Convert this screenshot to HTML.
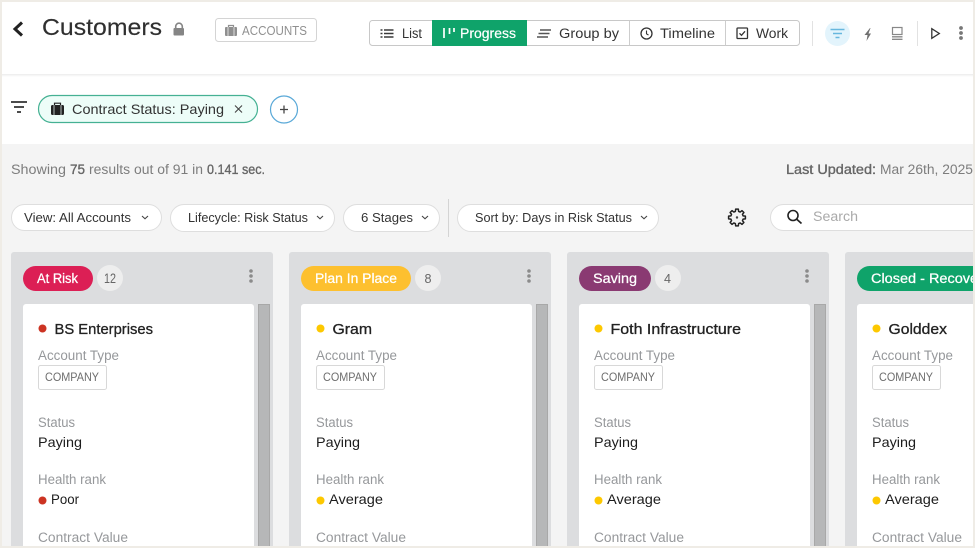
<!DOCTYPE html>
<html lang="en"><head><meta charset="utf-8"><title>Customers</title>
<style>
html,body{margin:0;padding:0;width:975px;height:548px;overflow:hidden;background:#efece6}
svg{display:block}
text{font-family:"Liberation Sans",sans-serif}
.l{font-size:13.5px;fill:#96989b}
.v{font-size:14px;fill:#1c1c1c}
.t{font-size:14.5px;fill:#222;stroke:#222;stroke-width:.3px}
.c{font-size:11.5px;fill:#6e6e6e}
.b{font-size:13.5px;fill:#fff;stroke:#fff;stroke-width:.25px}
.n{font-size:13px;fill:#666}
.p{font-size:12.5px;fill:#333}
.s{font-size:13.5px;fill:#7d7d7d}
.sb{font-size:13.5px;fill:#666;stroke:#666;stroke-width:.35px}
.tab{font-size:13.5px;fill:#333}
</style></head><body>
<svg width="975" height="548" viewBox="0 0 975 548" xmlns="http://www.w3.org/2000/svg">
<rect width="975" height="548" fill="#efece6"/>
<defs>
<clipPath id="m"><rect x="2" y="2" width="971" height="544"/></clipPath>
<linearGradient id="sh" x1="0" y1="0" x2="0" y2="1"><stop offset="0" stop-color="#ececec"/><stop offset="1" stop-color="#fff"/></linearGradient>
</defs>
<g clip-path="url(#m)">
<rect x="2" y="2" width="971" height="142" fill="#fff"/>
<rect x="2" y="74" width="971" height="3" fill="url(#sh)"/>
<rect x="2" y="144" width="971" height="402" fill="#f4f4f4"/>

<!-- header -->
<path d="M22 22.500 15 29l7 6.500" fill="none" stroke="#222" stroke-width="3"/>
<text x="42" y="35" font-size="23" fill="#2f2f2f" stroke="#2f2f2f" stroke-width=".15" textLength="120" lengthAdjust="spacingAndGlyphs">Customers</text>
<path d="M175.700 28v-1.500a3.300 3.300 0 0 1 6.600 0V28" fill="none" stroke="#858585" stroke-width="1.600"/>
<rect x="173.500" y="28" width="10.500" height="7.500" rx="1" fill="#858585"/>
<rect x="215.500" y="18.500" width="101" height="23" rx="3" fill="#fff" stroke="#d4d4d4"/>
<rect x="225" y="27" width="12" height="9" rx="1" fill="#8f8f8f"/>
<path d="M228.500 27v-1.500h5V27" fill="none" stroke="#8f8f8f" stroke-width="1.200"/>
<path d="M228 27v9M234 27v9" stroke="#fff" stroke-width=".7"/>
<text x="242" y="35" font-size="12.500" fill="#909090" textLength="65" lengthAdjust="spacingAndGlyphs">ACCOUNTS</text>

<!-- view tabs -->
<rect x="369.500" y="20.500" width="430" height="25" rx="3" fill="#fff" stroke="#c8c8c8"/>
<rect x="432" y="20" width="95" height="26" fill="#0fa36a"/>
<path d="M629.500 20.500v25M725.500 20.500v25" stroke="#cdcdcd"/>
<path d="M384 30h9.500M384 33.500h9.500M384 37h9.500M380.500 30h2M380.500 33.500h2M380.500 37h2" stroke="#3a3a3a" stroke-width="1.400" fill="none"/>
<text class="tab" x="402" y="38" textLength="20" lengthAdjust="spacingAndGlyphs">List</text>
<path d="M444 28v10M449.500 28v6M454 28v4" stroke="#fff" stroke-width="1.700" fill="none"/>
<text class="tab" x="460" y="38" textLength="56" lengthAdjust="spacingAndGlyphs" style="fill:#fff;stroke:#fff;stroke-width:.2px">Progress</text>
<path d="M540 30h11M538.500 33.500h11M537 37h11" stroke="#555" stroke-width="1.500" fill="none"/>
<text class="tab" x="559" y="38" textLength="60" lengthAdjust="spacingAndGlyphs">Group by</text>
<circle cx="646.500" cy="33.500" r="5.500" fill="none" stroke="#333" stroke-width="1.300"/>
<path d="M646.500 30.500v3.300l2 1.300" fill="none" stroke="#333" stroke-width="1.100"/>
<text class="tab" x="660" y="38" textLength="55" lengthAdjust="spacingAndGlyphs">Timeline</text>
<rect x="737" y="28" width="10.500" height="10.500" rx=".8" fill="none" stroke="#333" stroke-width="1.300"/>
<path d="M739.500 33.300l2 2 3.500-4" fill="none" stroke="#333" stroke-width="1.300"/>
<text class="tab" x="756" y="38" textLength="32" lengthAdjust="spacingAndGlyphs">Work</text>

<!-- right icons -->
<path d="M812.500 21v25M917.500 21v25" stroke="#e2e2e2"/>
<circle cx="837.500" cy="33.500" r="12.500" fill="#e3f4fc"/>
<path d="M830.500 29.500h14M833 33.500h9M835.500 37.500h4" stroke="#67b7de" stroke-width="1.600" fill="none"/>
<path d="M870 28 864.500 35h3l-1 6 4.500-7.500h-2.500l2-5.500z" fill="#707070"/>
<rect x="892.500" y="27.500" width="9.500" height="7" fill="none" stroke="#888" stroke-width="1.200"/>
<path d="M892 36.800h10.500M892 39.300h10.500" stroke="#888" stroke-width="1.300" fill="none"/>
<path d="M931.800 28.700v9.600l7.500-4.800z" fill="none" stroke="#333" stroke-width="1.300"/>
<circle cx="961" cy="28" r="1.900" fill="#777"/><circle cx="961" cy="33" r="1.900" fill="#777"/><circle cx="961" cy="38" r="1.900" fill="#777"/>

<!-- filter row -->
<path d="M11 102h16M14 107h10M17 112h4" stroke="#333" stroke-width="1.700" fill="none"/>
<rect x="38.500" y="95.500" width="219" height="27" rx="13.500" fill="#edfdf8" stroke="#45b193" stroke-width="1.200"/>
<rect x="51" y="105" width="13" height="10" rx="1.500" fill="#222"/>
<path d="M54.500 105v-1.800h6v1.800" fill="none" stroke="#222" stroke-width="1.200"/>
<path d="M54 105v10M61 105v10" stroke="#edfdf8" stroke-width=".7"/>
<text x="72" y="114" font-size="14" fill="#333" textLength="152" lengthAdjust="spacingAndGlyphs">Contract Status: Paying</text>
<path d="M235 105.500l7 7M242 105.500l-7 7" stroke="#444" stroke-width="1.100"/>
<circle cx="284" cy="109.500" r="13.500" fill="#fff" stroke="#5aa9d8" stroke-width="1.200"/>
<path d="M280 109.500h8M284 105.500v8" stroke="#444" stroke-width="1.300"/>

<!-- results -->
<text class="s" x="11" y="174" textLength="55" lengthAdjust="spacingAndGlyphs">Showing</text>
<text class="sb" x="70" y="174" textLength="15" lengthAdjust="spacingAndGlyphs">75</text>
<text class="s" x="89" y="174" textLength="114" lengthAdjust="spacingAndGlyphs">results out of 91 in</text>
<text class="sb" x="207" y="174" textLength="58" lengthAdjust="spacingAndGlyphs" style="font-size:14px">0.141 sec.</text>
<text class="sb" x="786" y="174" textLength="90" lengthAdjust="spacingAndGlyphs">Last Updated:</text>
<text class="s" x="880" y="174" textLength="93" lengthAdjust="spacingAndGlyphs">Mar 26th, 2025</text>

<!-- filter pills -->
<rect x="11.500" y="204.500" width="150" height="26" rx="13" fill="#fff" stroke="#dedede"/>
<text class="p" x="24" y="222" textLength="107" lengthAdjust="spacingAndGlyphs">View: All Accounts</text>
<path d="M142 216l3 2.800 3-2.800" fill="none" stroke="#444" stroke-width="1.100"/>
<rect x="170.500" y="204.500" width="164" height="27" rx="13.500" fill="#fff" stroke="#dedede"/>
<text class="p" x="188" y="222" textLength="120" lengthAdjust="spacingAndGlyphs">Lifecycle: Risk Status</text>
<path d="M317 216l3 2.800 3-2.800" fill="none" stroke="#444" stroke-width="1.100"/>
<rect x="343.500" y="204.500" width="96" height="27" rx="13.500" fill="#fff" stroke="#dedede"/>
<text class="p" x="361" y="222" textLength="52" lengthAdjust="spacingAndGlyphs">6 Stages</text>
<path d="M422 216l3 2.800 3-2.800" fill="none" stroke="#444" stroke-width="1.100"/>
<path d="M448.500 199v38" stroke="#d4d4d4"/>
<rect x="457.500" y="204.500" width="201" height="27" rx="13.500" fill="#fff" stroke="#dedede"/>
<text class="p" x="475" y="222" textLength="157" lengthAdjust="spacingAndGlyphs">Sort by: Days in Risk Status</text>
<path d="M641 216l3 2.800 3-2.800" fill="none" stroke="#444" stroke-width="1.100"/>
<polygon transform="translate(737 217.500)" points="6.090,-1.630 8.400,-1.330 8.400,1.330 6.090,1.630 5.460,3.150 6.880,5 5,6.880 3.150,5.460 1.630,6.090 1.330,8.400 -1.330,8.400 -1.630,6.090 -3.150,5.460 -5,6.880 -6.880,5 -5.460,3.150 -6.090,1.630 -8.400,1.330 -8.400,-1.330 -6.090,-1.630 -5.460,-3.150 -6.880,-5 -5,-6.880 -3.150,-5.460 -1.630,-6.090 -1.330,-8.400 1.330,-8.400 1.630,-6.090 3.150,-5.460 5,-6.880 6.880,-5 5.460,-3.150" fill="none" stroke="#222" stroke-width="1.500" stroke-linejoin="round"/>
<circle cx="737" cy="217.500" r="1.200" fill="#444"/>
<rect x="770.500" y="204.500" width="220" height="26" rx="13" fill="#fff" stroke="#dedede"/>
<circle cx="793" cy="215.500" r="5" fill="none" stroke="#222" stroke-width="1.600"/>
<path d="M796.500 219l5 4.500" stroke="#222" stroke-width="1.700"/>
<text x="813" y="221" font-size="13.500" fill="#aaa" textLength="45" lengthAdjust="spacingAndGlyphs">Search</text>

<!-- column 1 -->
<rect x="11" y="252" width="262" height="300" rx="3" fill="#dcdddf"/>
<rect x="23" y="266" width="70" height="25" rx="12.500" fill="#dc1f55"/>
<text class="b" x="37" y="283" textLength="41" lengthAdjust="spacingAndGlyphs">At Risk</text>
<circle cx="110" cy="278" r="13" fill="#eeeeee"/>
<text class="n" x="104" y="283" textLength="12" lengthAdjust="spacingAndGlyphs" style="font-size:13.500px">12</text>
<circle cx="251" cy="271" r="1.800" fill="#8b8b8b"/><circle cx="251" cy="276" r="1.800" fill="#8b8b8b"/><circle cx="251" cy="281" r="1.800" fill="#8b8b8b"/>
<rect x="23" y="304" width="231" height="250" rx="3" fill="#fff"/>
<rect x="258.500" y="304.500" width="11" height="250" fill="#b6b7b8" stroke="#a8a8a8"/>
<circle cx="42.500" cy="328.500" r="4" fill="#cc3322"/>
<text class="t" x="54.500" y="334" textLength="98.500" lengthAdjust="spacingAndGlyphs">BS Enterprises</text>
<text class="l" x="38" y="360" textLength="81" lengthAdjust="spacingAndGlyphs">Account Type</text>
<rect x="38.500" y="365.500" width="68" height="24" rx="2" fill="#fff" stroke="#d8d8d8"/>
<text class="c" x="45" y="381" textLength="54" lengthAdjust="spacingAndGlyphs">COMPANY</text>
<text class="l" x="38" y="427" textLength="37" lengthAdjust="spacingAndGlyphs">Status</text>
<text class="v" x="38" y="447" textLength="44" lengthAdjust="spacingAndGlyphs">Paying</text>
<text class="l" x="38" y="484" textLength="68" lengthAdjust="spacingAndGlyphs">Health rank</text>
<circle cx="42.500" cy="500.500" r="4" fill="#cc3322"/>
<text class="v" x="51" y="504" textLength="28" lengthAdjust="spacingAndGlyphs">Poor</text>
<text class="l" x="38" y="542" textLength="90" lengthAdjust="spacingAndGlyphs">Contract Value</text>

<!-- column 2 -->
<rect x="289" y="252" width="262" height="300" rx="3" fill="#dcdddf"/>
<rect x="301" y="266" width="110" height="25" rx="12.500" fill="#fdc02f"/>
<text class="b" x="315" y="283" textLength="82" lengthAdjust="spacingAndGlyphs">Plan In Place</text>
<circle cx="428" cy="278" r="13" fill="#eeeeee"/>
<text class="n" x="424.500" y="283" textLength="7" lengthAdjust="spacingAndGlyphs">8</text>
<circle cx="529" cy="271" r="1.800" fill="#8b8b8b"/><circle cx="529" cy="276" r="1.800" fill="#8b8b8b"/><circle cx="529" cy="281" r="1.800" fill="#8b8b8b"/>
<rect x="301" y="304" width="231" height="250" rx="3" fill="#fff"/>
<rect x="536.500" y="304.500" width="11" height="250" fill="#b6b7b8" stroke="#a8a8a8"/>
<circle cx="320.500" cy="328.500" r="4" fill="#fdc800"/>
<text class="t" x="332.500" y="334" textLength="39.500" lengthAdjust="spacingAndGlyphs">Gram</text>
<text class="l" x="316" y="360" textLength="81" lengthAdjust="spacingAndGlyphs">Account Type</text>
<rect x="316.500" y="365.500" width="68" height="24" rx="2" fill="#fff" stroke="#d8d8d8"/>
<text class="c" x="323" y="381" textLength="54" lengthAdjust="spacingAndGlyphs">COMPANY</text>
<text class="l" x="316" y="427" textLength="37" lengthAdjust="spacingAndGlyphs">Status</text>
<text class="v" x="316" y="447" textLength="44" lengthAdjust="spacingAndGlyphs">Paying</text>
<text class="l" x="316" y="484" textLength="68" lengthAdjust="spacingAndGlyphs">Health rank</text>
<circle cx="320.500" cy="500.500" r="4" fill="#fdc800"/>
<text class="v" x="329" y="504" textLength="54" lengthAdjust="spacingAndGlyphs">Average</text>
<text class="l" x="316" y="542" textLength="90" lengthAdjust="spacingAndGlyphs">Contract Value</text>

<!-- column 3 -->
<rect x="567" y="252" width="262" height="300" rx="3" fill="#dcdddf"/>
<rect x="579" y="266" width="72" height="25" rx="12.500" fill="#8a3a72"/>
<text class="b" x="593" y="283" textLength="44" lengthAdjust="spacingAndGlyphs">Saving</text>
<circle cx="668" cy="278" r="13" fill="#eeeeee"/>
<text class="n" x="664" y="283" textLength="7" lengthAdjust="spacingAndGlyphs">4</text>
<circle cx="807" cy="271" r="1.800" fill="#8b8b8b"/><circle cx="807" cy="276" r="1.800" fill="#8b8b8b"/><circle cx="807" cy="281" r="1.800" fill="#8b8b8b"/>
<rect x="579" y="304" width="231" height="250" rx="3" fill="#fff"/>
<rect x="814.500" y="304.500" width="11" height="250" fill="#b6b7b8" stroke="#a8a8a8"/>
<circle cx="598.500" cy="328.500" r="4" fill="#fdc800"/>
<text class="t" x="610.500" y="334" textLength="130.500" lengthAdjust="spacingAndGlyphs">Foth Infrastructure</text>
<text class="l" x="594" y="360" textLength="81" lengthAdjust="spacingAndGlyphs">Account Type</text>
<rect x="594.500" y="365.500" width="68" height="24" rx="2" fill="#fff" stroke="#d8d8d8"/>
<text class="c" x="601" y="381" textLength="54" lengthAdjust="spacingAndGlyphs">COMPANY</text>
<text class="l" x="594" y="427" textLength="37" lengthAdjust="spacingAndGlyphs">Status</text>
<text class="v" x="594" y="447" textLength="44" lengthAdjust="spacingAndGlyphs">Paying</text>
<text class="l" x="594" y="484" textLength="68" lengthAdjust="spacingAndGlyphs">Health rank</text>
<circle cx="598.500" cy="500.500" r="4" fill="#fdc800"/>
<text class="v" x="607" y="504" textLength="54" lengthAdjust="spacingAndGlyphs">Average</text>
<text class="l" x="594" y="542" textLength="90" lengthAdjust="spacingAndGlyphs">Contract Value</text>

<!-- column 4 -->
<rect x="845" y="252" width="262" height="300" rx="3" fill="#dcdddf"/>
<rect x="857" y="266" width="150" height="25" rx="12.500" fill="#0fa36a"/>
<text class="b" x="871" y="283" textLength="128" lengthAdjust="spacingAndGlyphs">Closed - Recovered</text>
<rect x="857" y="304" width="231" height="250" rx="3" fill="#fff"/>
<circle cx="876.500" cy="328.500" r="4" fill="#fdc800"/>
<text class="t" x="888.500" y="334" textLength="58.500" lengthAdjust="spacingAndGlyphs">Golddex</text>
<text class="l" x="872" y="360" textLength="81" lengthAdjust="spacingAndGlyphs">Account Type</text>
<rect x="872.500" y="365.500" width="68" height="24" rx="2" fill="#fff" stroke="#d8d8d8"/>
<text class="c" x="879" y="381" textLength="54" lengthAdjust="spacingAndGlyphs">COMPANY</text>
<text class="l" x="872" y="427" textLength="37" lengthAdjust="spacingAndGlyphs">Status</text>
<text class="v" x="872" y="447" textLength="44" lengthAdjust="spacingAndGlyphs">Paying</text>
<text class="l" x="872" y="484" textLength="68" lengthAdjust="spacingAndGlyphs">Health rank</text>
<circle cx="876.500" cy="500.500" r="4" fill="#fdc800"/>
<text class="v" x="885" y="504" textLength="54" lengthAdjust="spacingAndGlyphs">Average</text>
<text class="l" x="872" y="542" textLength="90" lengthAdjust="spacingAndGlyphs">Contract Value</text>
</g>
</svg>
</body></html>
